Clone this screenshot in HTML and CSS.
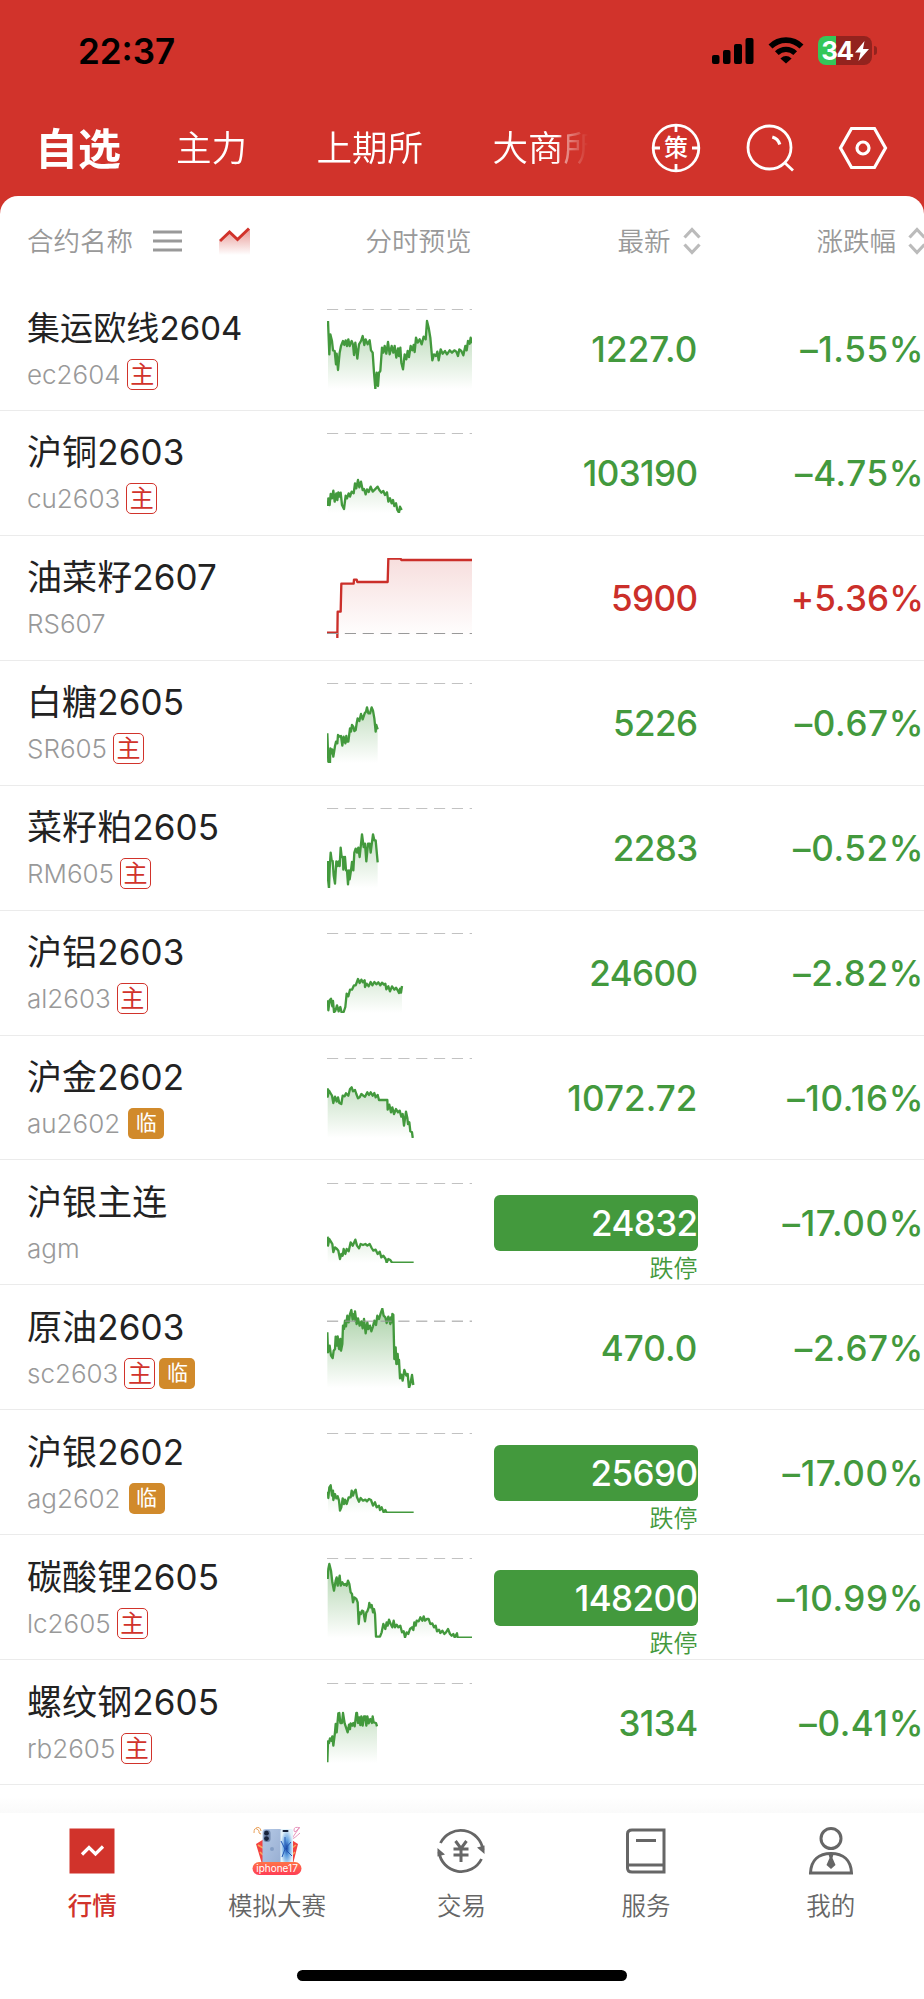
FILE: index.html
```html
<!DOCTYPE html>
<html lang="zh-CN">
<head>
    <meta charset="UTF-8">
    <meta name="viewport" content="width=device-width, initial-scale=1.0">
    <title>行情</title>
    <link rel="stylesheet" href="styles.css">
</head>
<body>
    <header class="top">
        <div class="status">
            <span class="time">22:37</span>
            <div class="status-icons">
                <svg class="signal" width="42" height="26" viewBox="0 0 42 26">
                    <rect x="0" y="17" width="7.5" height="9" rx="2"/>
                    <rect x="11" y="12" width="7.5" height="14" rx="2"/>
                    <rect x="22" y="6" width="8" height="20" rx="2"/>
                    <rect x="33.5" y="0" width="8" height="26" rx="2"/>
                </svg>
                <svg class="wifi" width="36" height="27" viewBox="0 0 36 27">
                    <path d="M2.5 9.5A22 22 0 0 1 33.5 9.5" fill="none" stroke="#000" stroke-width="5.6"/>
                    <path d="M8.8 16.2A13 13 0 0 1 27.2 16.2" fill="none" stroke="#000" stroke-width="5.2"/>
                    <path d="M12.4 21.4Q18 16.5 23.6 21.4L18 26.6Z"/>
                </svg>
                <div class="battery">
                    <span>34</span>
                    <svg width="14" height="20" viewBox="0 0 14 20"><path d="M9.5 0L0 11.5H5.5L3.5 20L14 8H8Z" fill="#fff"/></svg>
                </div>
            </div>
        </div>
        <div class="nav">
            <nav class="tabs">
                <a class="active">自选</a>
                <a>主力</a>
                <a>上期所</a>
                <a>大商所</a>
            </nav>
            <div class="actions">
                <div class="strategy">
                    <svg width="50" height="50" viewBox="0 0 50 50" fill="none" stroke="#fff" stroke-width="2.8">
                        <circle cx="25" cy="25" r="22.8"/>
                        <path d="M25 2V9M25 41V48M2 25H9M41 25H48"/>
                    </svg>
                    <span>策</span>
                </div>
                <svg width="50" height="50" viewBox="0 0 50 50" fill="none" stroke="#fff" stroke-width="2.8">
                    <circle cx="24.5" cy="24.5" r="21.5"/>
                    <path d="M27.3 14A11 11 0 0 1 34.8 21.5" stroke-width="3.2"/>
                    <path d="M40 40L48 47.5"/>
                </svg>
                <svg width="50" height="50" viewBox="0 0 50 50" fill="none" stroke="#fff" stroke-width="3.2">
                    <path d="M13.5 5.5H36.5L47.5 25L36.5 44.5H13.5L2.5 25Z"/>
                    <circle cx="25" cy="25" r="6"/>
                </svg>
            </div>
        </div>
    </header>

    <main class="panel">
        <div class="row head">
            <div class="head-name">
                合约名称
                <svg width="29" height="22" viewBox="0 0 29 22"><path d="M0 2H29M0 11H29M0 20H29" stroke="#999" stroke-width="3"/></svg>
                <svg class="trend" width="31" height="28" viewBox="0 0 31 28">
                    <defs>
                        <linearGradient id="trend-fill" x1="0" y1="0" x2="0" y2="1">
                            <stop offset="0" stop-color="#d1332b" stop-opacity=".5"/>
                            <stop offset="1" stop-color="#d1332b" stop-opacity="0"/>
                        </linearGradient>
                    </defs>
                    <path d="M0 14L10 4L18 12L31 2V28H0Z" fill="url(#trend-fill)"/>
                    <path d="M1 14L10.5 5L18.5 12.5L30 1.5" fill="none" stroke="#d1332b" stroke-width="3"/>
                </svg>
            </div>
            <div class="head-chart">分时预览</div>
            <div class="head-price">最新<svg class="sort" width="18" height="28" viewBox="0 0 18 28"><path d="M1.5 10.5L9 2.5L16.5 10.5M1.5 17.5L9 25.5L16.5 17.5"/></svg></div>
            <div class="head-change">涨跌幅<svg class="sort" width="18" height="28" viewBox="0 0 18 28"><path d="M1.5 10.5L9 2.5L16.5 10.5M1.5 17.5L9 25.5L16.5 17.5"/></svg></div>
        </div>
        <div class="list"></div>
    </main>

    <footer class="bottom">
        <nav class="tabbar">
            <a class="active">
                <svg width="50" height="50" viewBox="0 0 50 50">
                    <rect x="2.5" y="2.5" width="45" height="45" fill="#d1332b"/>
                    <path d="M15 28.5L22 21.5L28.5 28L36 20.5" fill="none" stroke="#fff" stroke-width="3.2"/>
                </svg>
                行情
            </a>
            <a>
                <svg width="50" height="50" viewBox="0 0 50 50">
                    <defs>
                        <linearGradient id="pill" x1="0" y1="0" x2="0" y2="1">
                            <stop offset="0" stop-color="#ff7448"/>
                            <stop offset="1" stop-color="#ff3d55"/>
                        </linearGradient>
                        <linearGradient id="phone" x1="0" y1="0" x2="1" y2="1">
                            <stop offset="0" stop-color="#b5c9e6"/>
                            <stop offset="1" stop-color="#95acd0"/>
                        </linearGradient>
                        <radialGradient id="screen">
                            <stop offset="0" stop-color="#123e9c"/>
                            <stop offset=".4" stop-color="#5c9ddf"/>
                            <stop offset="1" stop-color="#e3f3fb"/>
                        </radialGradient>
                    </defs>
                    <path d="M4 18L12 13V38H10ZM46 18L38 13V38H41Z" fill="#f34340"/>
                    <path d="M6 19L11 22M8 26L11 29M44 19L40 22M43 26L40 29" stroke="#f9a25a" stroke-width="1.5"/>
                    <path d="M2 7Q2 1 5 3T7 6T9 8M4 2Q8 0 9 5" fill="none" stroke="#e9a15b" stroke-width="1"/>
                    <path d="M48 2Q42 0 42 4T46 3T43 8T48 7" fill="none" stroke="#e795bd" stroke-width="1"/>
                    <rect x="10.5" y="3" width="20" height="38" rx="3" fill="url(#phone)"/>
                    <rect x="11.5" y="4" width="7" height="12" rx="3" fill="#6f86ac"/>
                    <circle cx="14.5" cy="7.2" r="2.4" fill="#18233c"/>
                    <circle cx="14.5" cy="12.6" r="2.4" fill="#18233c"/>
                    <circle cx="20" cy="23" r="2" fill="#839dc4"/>
                    <rect x="28.5" y="3" width="12.5" height="38" rx="2" fill="url(#screen)"/>
                    <path d="M33 23L29 15M33 23L30 31M33 23L39 16M33 23L40 30M33 23V11" stroke="#2458b4" stroke-width="1"/>
                    <rect x="30.5" y="4" width="6" height="2" rx="1" fill="#16223a"/>
                    <rect x=".5" y="36" width="49" height="13" rx="6.5" fill="url(#pill)"/>
                    <text class="pill-text" x="25" y="45.5">iphone17</text>
                </svg>
                模拟大赛
            </a>
            <a>
                <svg width="50" height="50" viewBox="0 0 50 50" fill="none" stroke="#666" stroke-width="2.8">
                    <path d="M4.5 17A22.5 22.5 0 0 1 47 24"/>
                    <path d="M45.5 33A22.5 22.5 0 0 1 3 26"/>
                    <path d="M41 21.5L48.5 19.5V28ZM9 28.5L1.5 30.5V22Z" fill="#666" stroke="none"/>
                    <path d="M19.5 15L25 22.5L30.5 15M17.5 23H32.5M17.5 29H32.5M25 22V36" stroke-width="3"/>
                </svg>
                交易
            </a>
            <a>
                <svg width="50" height="50" viewBox="0 0 50 50" fill="none" stroke="#666" stroke-width="3">
                    <path d="M43 4H11Q6.5 4 6.5 8V42Q6.5 46 11 46H43ZM7 39H43M15 14.5H35"/>
                </svg>
                服务
            </a>
            <a>
                <svg width="50" height="50" viewBox="0 0 50 50" fill="none" stroke="#666" stroke-width="3">
                    <circle cx="25" cy="12.5" r="10"/>
                    <path d="M4.5 47C5 34 13 27.5 25 27.5S45 34 45.5 47Z"/>
                    <path d="M22.5 28H27.5L26.5 32L29.5 39L25 43L20.5 39L23.5 32Z" fill="#666" stroke="none"/>
                </svg>
                我的
            </a>
        </nav>
        <div class="home-bar"></div>
    </footer>

    <script>
        // points are x,y pairs, x starts at 50, y is measured from base; line is the previous close
        let contracts = [
            {
                name: "集运欧线2604", code: "ec2604", tags: ["主"], price: "1227.0", change: "–1.55%", long: true,
                base: 54, line: 1,
                points: "53,90 57,190 60,130 65,150 68,178 73,180 77,220 79,188 83,237 88,185 92,165 98,150 102,162 106,148 110,165 114,145 118,165 124,150 128,160 131,192 135,155 141,203 146,160 152,150 157,135 162,162 166,145 172,160 178,148 182,178 187,185 191,245 195,293 199,245 203,285 206,245 210,240 215,170 219,185 223,165 228,188 233,153 238,190 244,165 249,185 253,165 258,200 263,172 266,195 270,170 273,215 278,235 283,190 288,205 292,180 296,198 301,165 306,178 310,162 313,183 317,140 322,155 328,145 334,160 340,137 346,145 350,90 355,110 360,140 366,208 371,190 377,195 381,182 385,208 391,175 397,188 404,180 410,190 418,178 425,185 432,178 438,182 443,195 447,175 453,180 459,193 465,165 469,178 473,150 478,158 481,140 485,157"
            },
            {
                name: "沪铜2603", code: "cu2603", tags: ["主"], price: "103190", change: "–4.75%",
                base: 429, line: 1,
                points: "53,648 54,625 58,645 61,612 65,625 69,602 73,635 78,610 81,630 84,607 87,620 91,608 95,645 101,657 106,617 110,625 115,610 119,620 124,605 130,610 134,580 138,595 143,570 147,592 152,575 157,600 161,597 166,613 170,598 175,606 181,590 187,605 194,598 202,590 207,600 213,608 219,603 224,615 230,607 234,635 239,625 244,640 248,630 252,648 257,640 261,660 266,668 269,650 274,660"
            },
            {
                name: "油菜籽2607", code: "RS607", tags: [], price: "5900", change: "+5.36%", up: true,
                base: 804, line: 226,
                points: "50,1028 81,1028 81,1044 82,965 91,965 93,881 130,881 131,869 139,869 141,876 232,876 234,806 271,806 273,810 485,810"
            },
            {
                name: "白糖2605", code: "SR605", tags: ["主"], price: "5226", change: "–0.67%",
                base: 69, line: 1,
                points: "51,220 54,305 59,308 60,265 63,280 65,268 69,290 74,258 77,245 81,250 83,225 88,230 92,228 96,257 100,230 105,250 108,228 109,245 114,245 119,205 122,215 125,195 129,200 132,213 136,210 139,190 142,175 147,183 152,162 157,178 163,160 167,155 170,142 174,160 179,160 184,142 188,152 192,175 196,215 198,195 202,208"
            },
            {
                name: "菜籽粕2605", code: "RM605", tags: ["主"], price: "2283", change: "–0.52%",
                base: 443, line: 1,
                points: "53,602 53,655 56,684 58,625 61,577 64,600 67,602 70,645 74,670 78,603 82,617 85,603 88,617 91,562 94,590 98,590 99,628 104,590 107,630 110,630 113,672 116,630 118,657 122,630 125,605 129,630 132,577 136,565 140,577 144,562 148,590 155,522 160,560 164,550 168,603 173,550 178,550 181,577 188,522 192,540 196,540 202,606"
            },
            {
                name: "沪铝2603", code: "al2603", tags: ["主"], price: "24600", change: "–2.82%",
                base: 818, line: 1,
                points: "53,1020 54,1050 58,1020 62,1015 66,1038 68,1022 71,1055 75,1052 80,1035 85,1053 90,1040 94,1057 100,1055 105,1040 109,1000 114,1008 119,988 125,988 131,975 136,975 143,956 148,968 153,958 158,966 163,960 164,980 169,970 175,978 181,965 186,975 192,965 198,972 204,966 210,975 215,967 221,973 225,970 228,987 234,978 239,993 245,978 252,988 257,982 262,990 266,998 269,985 272,997 275,977"
            },
            {
                name: "沪金2602", code: "au2602", tags: ["临"], price: "1072.72", change: "–10.16%",
                base: 82, line: 1,
                points: "52,173 52,198 56,180 62,190 65,195 69,217 74,198 79,213 83,200 87,217 93,220 97,195 103,197 107,188 114,195 119,175 124,170 128,182 134,178 138,190 143,203 148,200 153,190 159,195 164,198 171,185 176,193 181,185 187,195 192,187 196,200 202,193 206,208 231,208 232,237 237,222 242,245 246,230 251,250 257,235 263,245 268,240 273,258 277,250 281,285 287,243 291,262 293,280 297,275 300,302 305,305 307,320 310,320"
            },
            {
                name: "沪银主连", code: "agm", tags: [], price: "24832", change: "–17.00%", limit: true,
                base: 457, line: 1,
                points: "52,618 53,645 57,625 63,635 66,640 69,664 74,650 80,655 84,660 89,685 93,670 97,675 100,655 105,670 109,655 115,662 121,635 127,645 135,627 140,645 146,653 151,640 158,643 165,640 171,645 178,640 184,652 189,660 196,657 202,670 208,663 213,680 219,675 226,685 229,696 234,685 240,688 245,696 310,696"
            },
            {
                name: "原油2603", code: "sc2603", tags: ["主", "临"], price: "470.0", change: "–2.67%",
                base: 832, line: 39,
                points: "51,905 53,965 58,945 62,975 67,982 70,960 74,955 76,918 80,945 82,917 86,955 90,925 92,960 96,940 98,885 101,895 104,870 107,887 111,855 115,875 119,850 123,838 127,867 131,850 136,872 134,842 139,880 143,863 148,885 153,872 157,893 161,865 166,908 171,875 174,895 179,885 183,902 188,887 192,870 197,883 201,855 206,865 211,848 216,834 220,855 225,860 229,877 234,858 240,880 242,860 245,875 246,850 249,852 252,985 256,950 258,1000 262,970 264,1000 266,988 269,1043 273,1032 277,1050 282,1018 288,1035 292,1030 296,1072 300,1060 305,1033 309,1063"
            },
            {
                name: "沪银2602", code: "ag2602", tags: ["临"], price: "25690", change: "–17.00%", limit: true,
                base: 67, line: 1,
                points: "53,243 54,262 57,230 61,224 65,255 68,240 69,268 74,250 78,263 82,257 86,270 89,300 93,290 97,263 101,280 104,267 109,280 115,260 121,260 124,240 128,255 131,245 136,237 140,260 146,273 151,262 158,270 165,267 170,272 176,265 182,268 188,285 194,275 199,290 206,285 209,298 214,290 220,305 225,298 229,306 310,306"
            },
            {
                name: "碳酸锂2605", code: "lc2605", tags: ["主"], price: "148200", change: "–10.99%", limit: true,
                base: 442, line: 1,
                points: "52,505 54,475 57,460 62,480 66,515 71,540 76,510 79,500 82,525 88,495 91,525 96,515 101,523 105,520 109,525 113,510 117,520 121,545 125,550 128,575 132,560 138,565 142,575 145,640 148,605 152,610 155,600 159,602 164,632 168,605 171,602 175,590 177,577 181,590 184,583 188,605 191,595 194,610 197,678 209,678 214,665 219,640 225,655 229,635 232,645 236,627 241,640 246,650 250,630 254,650 259,642 264,650 270,645 275,665 280,662 284,680 289,665 294,670 299,655 305,650 309,658 312,635 316,645 319,630 325,632 330,620 336,630 340,617 344,630 350,625 355,625 360,640 366,638 371,650 376,645 380,662 386,657 390,667 396,660 402,670 407,665 413,655 419,670 424,675 429,670 433,680 440,668 442,681 485,681"
            },
            {
                name: "螺纹钢2605", code: "rb2605", tags: ["主"], price: "3134", change: "–0.41%",
                base: 817, line: 1,
                points: "51,1055 53,992 56,997 59,983 63,990 66,977 69,1005 74,965 76,940 79,965 84,908 87,907 90,937 95,937 98,907 103,938 107,950 112,965 116,942 119,955 121,938 126,945 129,937 133,947 138,907 140,907 143,937 147,920 150,943 153,917 157,945 161,917 165,917 168,945 171,917 175,938 180,925 185,937 187,917 190,935 197,937 200,947"
            }
        ];

        function drawChart(c) {
            let color = c.up ? "#cb2f2a" : "#43993d";
            let pts = c.points.split(" ").map(p => {
                let [x, y] = p.split(",");
                return [x - 50, y - c.base];
            });
            let line = pts.join(" ");
            let last = pts[pts.length - 1][0];
            let id = "fill-" + c.code;
            return `
                <svg class="chart" viewBox="0 0 435 240" preserveAspectRatio="none">
                    <linearGradient id="${id}" gradientUnits="userSpaceOnUse" x1="0" y1="0" x2="0" y2="240">
                        <stop offset="0" stop-color="${color}" stop-opacity="${c.up ? .16 : .46}"/>
                        <stop offset="1" stop-color="${color}" stop-opacity="0"/>
                    </linearGradient>
                    <polygon points="${pts[0][0]},240 ${line} ${last},240" fill="url(#${id})"/>
                    <polyline points="${line}" fill="none" stroke="${color}" stroke-width="7" stroke-linejoin="round"/>
                    <path d="M0 ${c.line}.5H435" stroke="${c.line > 1 ? "#999" : "#c2c2c2"}" stroke-width="3" stroke-dasharray="33.5 20"/>
                </svg>`;
        }

        let list = document.querySelector(".panel .list");

        contracts.map(c => {
            let row = document.createElement("div");
            row.className = "row contract" + (c.up ? " up" : "") + (c.limit ? " limit" : "");
            let tags = c.tags.map(t => `<i class="tag ${t == "主" ? "main" : "near"}">${t}</i>`).join("");
            row.innerHTML = `
                <div class="info">
                    <div class="name${c.long ? " long" : ""}">${c.name}</div>
                    <div class="code"><span>${c.code}</span>${tags}</div>
                </div>
                ${drawChart(c)}
                <div class="price"><b${c.price.includes(".") ? ' class="decimal"' : ""}>${c.price}</b>${c.limit ? "<small>跌停</small>" : ""}</div>
                <div class="change">${c.change}</div>`;
            list.appendChild(row);
        });
    </script>
</body>
</html>
```
FILE: styles.css
```css
* {
    box-sizing: border-box;
    padding: 0;
    margin: 0;
}
body {
    width: 924px;
    height: 1999px;
    overflow: hidden;
    display: flex;
    flex-direction: column;
    background-color: #d1332b;
    font-family: Inter, "Noto Sans CJK SC", sans-serif;
    font-weight: 350;
}
svg {
    display: block;
    flex: none;
}
.top {
    height: 196px;
    flex: none;
    color: white;
}
.status {
    display: flex;
    align-items: center;
    justify-content: space-between;
    height: 101px;
    padding: 0 47px 0 78px;
}
.status .time {
    color: black;
    font-size: 35px;
    font-weight: 600;
}
.status-icons {
    display: flex;
    align-items: center;
    gap: 14px;
}
.battery {
    position: relative;
    display: flex;
    align-items: center;
    justify-content: center;
    width: 54px;
    height: 29px;
    margin-right: 5px;
    border-radius: 8px;
    background: linear-gradient(to right, #34c759 18px, #93231e 18px);
    font-size: 26px;
    font-weight: 700;
    letter-spacing: -1.5px;
}
.battery svg {
    margin-left: 2px;
}
.battery::after {
    content: "";
    position: absolute;
    right: -5px;
    top: 10px;
    width: 3px;
    height: 9px;
    border-radius: 0 3px 3px 0;
    background-color: #93231e;
}
.nav {
    display: flex;
    align-items: center;
    justify-content: space-between;
    height: 93px;
    padding: 0 36px 0 35px;
}
.tabs {
    display: flex;
    align-items: center;
    width: 553px;
    margin-top: -4px;
    overflow: hidden;
    white-space: nowrap;
    font-size: 35.5px;
    -webkit-mask-image: linear-gradient(to right, #000 522px, rgba(0,0,0,.5) 529px, transparent 553px);
    mask-image: linear-gradient(to right, #000 522px, rgba(0,0,0,.5) 529px, transparent 553px);
}
.tabs a {
    margin-right: 69.5px;
}
.tabs a.active {
    margin-right: 55px;
    font-size: 43px;
    font-weight: 700;
}
.actions {
    display: flex;
    gap: 43.5px;
}
.strategy {
    display: grid;
    place-items: center;
}
.strategy > * {
    grid-area: 1 / 1;
}
.strategy span {
    font-size: 24px;
    line-height: 48px;
    font-weight: 500;
}
.panel {
    flex: 1;
    min-height: 0;
    border-radius: 18px 18px 0 0;
    background-color: white;
}
.row {
    display: grid;
    grid-template-columns: 299.5px 145px 226px 1fr;
    padding-left: 27px;
}
.head {
    height: 90px;
    align-items: center;
    color: #999;
    font-size: 26.5px;
    line-height: 36px;
    white-space: nowrap;
}
.head-name {
    display: flex;
    align-items: center;
}
.head-name svg {
    margin-left: 20px;
}
.head-name .trend {
    margin-left: 37px;
}
.head-chart {
    text-align: right;
}
.head-price,
.head-change {
    display: flex;
    align-items: center;
    justify-content: flex-end;
}
.head-change {
    margin-right: -2px;
}
.sort {
    margin-left: 12px;
    margin-right: -3px;
    fill: none;
    stroke: #bbb;
    stroke-width: 3.2;
}
.head-change .sort {
    margin-right: 0;
}
.contract {
    height: 124.93px;
    border-bottom: 1px solid #ebebeb;
    color: #43993d;
}
.contract.up {
    color: #cb2f2a;
}
.name {
    height: 44px;
    margin-top: 19.5px;
    color: #222;
    font-size: 35px;
    line-height: 44px;
    font-weight: 400;
    letter-spacing: .1px;
}
.name.long {
    font-size: 33px;
}
.code {
    display: flex;
    align-items: center;
    height: 31px;
    margin-top: 9px;
    color: #999;
    font-size: 26px;
}
.tag {
    height: 31px;
    border-radius: 5px;
    text-align: center;
    font-style: normal;
}
.tag.main {
    width: 31px;
    margin-left: 6px;
    border: 1px solid #d1332b;
    color: #d1332b;
    font-size: 24px;
    line-height: 29px;
    font-weight: 400;
}
.tag.near {
    width: 36px;
    margin-left: 8px;
    background-color: #d18a2b;
    color: white;
    font-size: 21px;
    line-height: 30px;
    font-weight: 400;
}
.tag.main + .tag.near {
    margin-left: 4px;
}
.chart {
    width: 145px;
    height: 80px;
    margin-top: 22.5px;
}
.price {
    display: flex;
    flex-direction: column;
    align-items: flex-end;
    padding-top: 34.5px;
}
.price b,
.change {
    font-size: 35px;
    line-height: 56px;
    font-weight: 500;
}
.price b {
    letter-spacing: -.6px;
}
.price b.decimal {
    letter-spacing: .1px;
}
.limit .price b {
    width: 204px;
    border-radius: 6px;
    background-color: #43993d;
    color: white;
    text-align: right;
}
.price small {
    font-size: 24px;
    line-height: 36px;
}
.change {
    padding-top: 34.5px;
    text-align: right;
    letter-spacing: .6px;
}
.contract.up .change {
    letter-spacing: .1px;
}
.bottom {
    position: relative;
    flex: none;
    height: 186px;
    background-color: white;
}
.bottom::before {
    content: "";
    position: absolute;
    left: 0;
    bottom: 100%;
    width: 100%;
    height: 16px;
    background: linear-gradient(to top, #fafafa, rgba(255,255,255,0));
}
.tabbar {
    display: grid;
    grid-template-columns: repeat(5, 1fr);
    margin-right: 1px;
    padding-top: 13px;
}
.tabbar a {
    display: flex;
    flex-direction: column;
    align-items: center;
    gap: 13px;
    color: #666;
    font-size: 24.5px;
    line-height: 34px;
}
.tabbar a.active {
    color: #d1332b;
    font-weight: 500;
}
.pill-text {
    fill: white;
    font-size: 10px;
    font-weight: 400;
    text-anchor: middle;
}
.home-bar {
    width: 330px;
    height: 11px;
    margin: 47px auto 0;
    border-radius: 6px;
    background-color: black;
}
```
